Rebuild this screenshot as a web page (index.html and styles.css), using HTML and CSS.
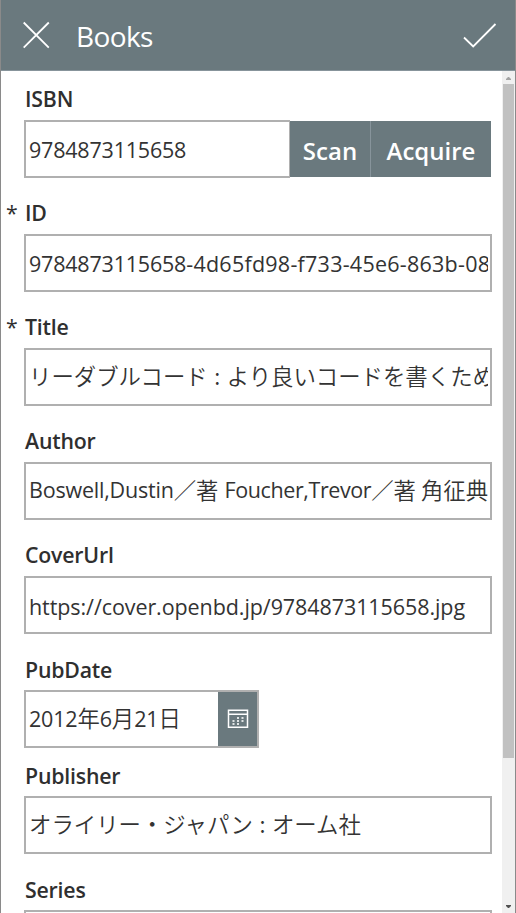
FILE: index.html
```html
<!DOCTYPE html>
<html lang="en">
<head>
<meta charset="utf-8">
<title>Books</title>
<link rel="stylesheet" href="styles.css">
</head>
<body>
<div class="app">
  <header class="bar">
    <svg class="close" width="28" height="28" viewBox="0 0 28 28"><path d="M1.7 1.5 26.8 26.6M26.8 1.5 1.7 26.6"/></svg>
    <h1>Books</h1>
    <svg class="check" width="34" height="26" viewBox="0 0 34 26"><path d="M1 15.5 10.2 24.5 32.5 2"/></svg>
  </header>
  <div class="body">
    <main class="form">
      <section class="field">
        <label><span>ISBN</span></label>
        <div class="row">
          <div class="input isbn"><div class="value"><span class="num">9784873115658</span></div></div>
          <button class="scan"><span>Scan</span></button>
          <button class="acquire"><span>Acquire</span></button>
        </div>
      </section>
      <section class="field">
        <label class="required"><span>ID</span></label>
        <div class="input"><div class="value"><span class="num">9784873115658</span><span class="num guid">-4d65fd98-f733-45e6-863b-08</span></div></div>
      </section>
      <section class="field">
        <label class="required"><span>Title</span></label>
        <div class="input high"><div class="value"><span class="jp">リーダブルコード<i class="colon">:</i>より良いコードを書くため</span></div></div>
      </section>
      <section class="field">
        <label><span>Author</span></label>
        <div class="input author"><div class="value"><span class="num">Boswell,Dustin</span><span class="jp">／著</span><span class="num gap tight">Foucher,Trevor</span><span class="jp">／著</span><span class="jp gap">角征典</span></div></div>
      </section>
      <section class="field">
        <label><span>CoverUrl</span></label>
        <div class="input"><div class="value"><span class="num url">https://cover.openbd.jp/9784873115658.jpg</span></div></div>
      </section>
      <section class="field date-field">
        <label><span>PubDate</span></label>
        <div class="input date"><div class="value"><span class="num">2012</span><span class="jp">年</span><span class="num">6</span><span class="jp">月</span><span class="num">21</span><span class="jp">日</span></div>
          <div class="picker"><svg width="22" height="20" viewBox="0 0 22 20"><path d="M1.5 1.2h19v17h-19zM1.5 5.2h19" class="frame"/><path class="dots" d="M10 8h2v2h-2zM14.5 8h2v2h-2zM5.5 11h2v2h-2zM10 11h2v2h-2zM14.5 11h2v2h-2zM5.5 14h2v2h-2zM10 14h2v2h-2z"/></svg></div>
        </div>
      </section>
      <section class="field">
        <label><span>Publisher</span></label>
        <div class="input high"><div class="value"><span class="jp">オライリー・ジャパン<i class="colon">:</i>オーム社</span></div></div>
      </section>
      <section class="field">
        <label><span>Series</span></label>
        <div class="input"></div>
      </section>
    </main>
    <aside class="scroll">
      <svg width="13" height="13" viewBox="0 0 13 13"><path d="M4 9h5v-1L7 6H6L4 8z" fill="#a3a3a3"/></svg>
      <div class="thumb"></div>
      <svg class="down" width="13" height="13" viewBox="0 0 13 13"><path d="M4 5h5v1L7 8H6L4 6z" fill="#505050"/></svg>
    </aside>
  </div>
</div>
</body>
</html>
```
FILE: styles.css
```css
* { box-sizing: border-box; }
body {
  margin: 0;
  background: #fff;
  color: #333;
  font-family: "Open Sans", "Noto Sans CJK JP", sans-serif;
}
.app {
  height: 913px;
  overflow: hidden;
  display: flex;
  flex-direction: column;
  border-left: 1px solid #8a8a8a;
  border-right: 1px solid #8a8a8a;
}
.bar {
  flex: 0 0 71px;
  display: flex;
  align-items: center;
  padding: 0 18px 0 21px;
  background: #6a797e;
  border-bottom: 1px solid #87949b;
  color: #fff;
}
.bar svg { fill: none; stroke: #fff; stroke-width: 1.8; }
h1 {
  margin: 1px auto 0 26px;
  font-size: 28px;
  font-weight: 400;
  line-height: 40px;
  letter-spacing: -0.6px;
}
.body { flex: 1; min-height: 0; display: flex; }
.form { flex: 1; min-width: 0; padding: 7px 10px 0 23px; }
.field { margin-bottom: 14px; }
.date-field { margin-bottom: 6px; }
label {
  display: flex;
  align-items: center;
  height: 42px;
  padding: 0 0 2px 1px;
  font-size: 21.3px;
  font-weight: 600;
  letter-spacing: -0.2px;
  color: #2f2f2f;
}
.date-field label, .date-field ~ .field label { padding-bottom: 0; }
.required::before {
  content: "*";
  width: 19px;
  margin-left: -19px;
  font-weight: 400;
}
.row { display: flex; }
.input {
  width: 468px;
  height: 58px;
  padding: 1px 2px 0 3px;
  overflow: hidden;
  border: 2px solid #b0b0b0;
  line-height: 54px;
  white-space: nowrap;
}
.value { display: flex; height: 54px; overflow: hidden; }
.high, .author, .date { padding-top: 0; }
.isbn { width: 266px; border-right-width: 1px; }
.num { font-size: 21.5px; letter-spacing: -0.2px; }
.guid { letter-spacing: 0.25px; }
.url { position: relative; top: 1px; letter-spacing: -0.08px; }
.tight { letter-spacing: -0.4px; }
.jp {
  position: relative;
  top: -2px;
  font-family: "Noto Sans CJK JP", sans-serif;
  font-weight: 350;
  font-size: 22.4px;
}
.author .num { position: relative; top: -1px; }
.colon { display: inline-block; width: 19px; text-align: center; font-style: normal; }
.gap { margin-left: 6px; }
.jp.gap { margin-left: 5px; }
button {
  height: 56px;
  margin-top: 1px;
  padding: 2px 0 0;
  border: 0;
  background: #6a797e;
  color: #fff;
  font: 600 24px "Open Sans", sans-serif;
}
.scan { width: 81px; border-right: 1px solid #87949b; }
.acquire { width: 120px; }
.date { position: relative; width: 235px; }
.picker {
  position: absolute;
  top: 0;
  right: 0;
  width: 39px;
  height: 54px;
  display: flex;
  align-items: center;
  justify-content: center;
  background: #6a797e;
}
.frame { fill: none; stroke: #fff; stroke-width: 1.5; }
.dots { fill: #dfe3e4; }
.scroll {
  width: 13px;
  display: flex;
  flex-direction: column;
  background: #f0f0f0;
}
.thumb { height: 674px; margin: 0 1px; background: #c1c1c1; }
.down { margin-top: auto; }
```
